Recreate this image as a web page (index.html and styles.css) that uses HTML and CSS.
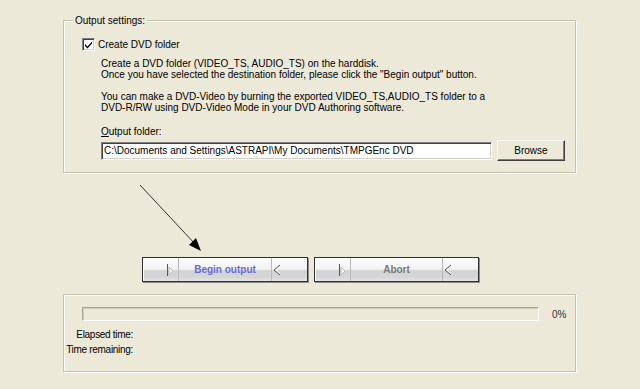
FILE: index.html
```html
<!DOCTYPE html>
<html lang="en">
<head>
  <meta charset="UTF-8">
  <title>DVD Output</title>
  <link rel="stylesheet" href="styles.css">
</head>
<body>
  <div class="window">
    <div class="group settings">
      <span class="group-title">Output settings:</span>

      <label class="check">
        <span class="box">
          <svg width="9" height="9" viewBox="0 0 9 9"><path d="M1 4 L3.5 6.5 L8 1.5 L8 3.5 L3.5 8.5 L1 6 Z" fill="#000"/></svg>
        </span>
        Create DVD folder
      </label>

      <p class="info">Create a DVD folder (VIDEO_TS, AUDIO_TS) on the harddisk.<br>Once you have selected the destination folder, please click the "Begin output" button.</p>
      <p class="info second">You can make a DVD-Video by burning the exported VIDEO_TS,AUDIO_TS folder to a<br>DVD-R/RW using DVD-Video Mode in your DVD Authoring software.</p>

      <div class="field-label"><u>O</u>utput folder:</div>
      <div class="folder-row">
        <input class="folder-input" type="text" value="C:\Documents and Settings\ASTRAPI\My Documents\TMPGEnc DVD">
        <button class="browse">Browse</button>
      </div>
    </div>

    <div class="arrow-area">
      <svg width="513" height="84" viewBox="0 0 513 84">
        <line x1="77" y1="12" x2="133" y2="72" stroke="#333" stroke-width="1"/>
        <polygon points="138,78 126,72 133,65" fill="#000"/>
      </svg>
    </div>

    <div class="actions">
      <button class="action begin">
        <span class="seg seg-side">
          <svg class="glyph-l" width="8" height="12" viewBox="0 0 8 12"><line x1="0.5" y1="0" x2="0.5" y2="12" stroke="#555"/><polygon points="2,3 6,7 2,11" fill="#f2f2f2" stroke="#bbb"/></svg>
        </span>
        <span class="seg seg-label">Begin output</span>
        <span class="seg seg-side right">
          <svg class="glyph-r" width="8" height="12" viewBox="0 0 8 12"><polygon points="7,1 1,6 7,11 7,9 4,6 7,3" fill="#f2f2f2"/><polyline points="7,1 1,6 7,11" fill="none" stroke="#555"/></svg>
        </span>
      </button>
      <button class="action abort">
        <span class="seg seg-side">
          <svg class="glyph-l" width="8" height="12" viewBox="0 0 8 12"><line x1="0.5" y1="0" x2="0.5" y2="12" stroke="#555"/><polygon points="2,3 6,7 2,11" fill="#f2f2f2" stroke="#bbb"/></svg>
        </span>
        <span class="seg seg-label">Abort</span>
        <span class="seg seg-side right">
          <svg class="glyph-r" width="8" height="12" viewBox="0 0 8 12"><polygon points="7,1 1,6 7,11 7,9 4,6 7,3" fill="#f2f2f2"/><polyline points="7,1 1,6 7,11" fill="none" stroke="#555"/></svg>
        </span>
      </button>
    </div>

    <div class="group status">
      <div class="progress-row">
        <div class="progress-bar"></div>
        <span class="percent">0%</span>
      </div>
      <div class="times">
        <span class="time-label">Elapsed time:</span>
        <span class="time-value"></span>
        <span class="time-label">Time remaining:</span>
        <span class="time-value"></span>
      </div>
    </div>
  </div>
</body>
</html>
```

FILE: styles.css
```css
body {
  margin: 0;
  background-color: #ece9d8;
  font-family: "Liberation Sans", Arial, sans-serif;
  font-size: 10px;
  color: #000;
}

.window {
  width: 640px;
  height: 389px;
  padding-left: 63px;
  box-sizing: border-box;
  overflow: hidden;
}

.group {
  position: relative;
  width: 513px;
  box-sizing: border-box;
  border: 1px solid #c5c2b2;
  box-shadow: inset 1px 1px 0 #fff, 1px 1px 0 #fff;
}

.group-title {
  position: absolute;
  top: -7px;
  left: 9px;
  padding: 0 2px;
  line-height: 13px;
  background-color: #ece9d8;
}

.settings {
  margin-top: 20px;
  height: 153px;
  padding: 17px 0 0 18px;
}

.check {
  display: flex;
  align-items: center;
  gap: 3px;
  height: 13px;
}

.check .box {
  width: 13px;
  height: 13px;
  box-sizing: border-box;
  border: 1px solid #808080;
  border-right-color: #fff;
  border-bottom-color: #fff;
  box-shadow: inset 1px 1px 0 #404040, inset -1px -1px 0 #d4d0c8;
  background: #fff;
  display: flex;
  align-items: center;
  justify-content: center;
}

.info {
  margin: 7px 0 0 19px;
  line-height: 11px;
}

.info.second {
  margin-top: 11px;
}

.field-label {
  margin: 13px 0 0 19px;
  line-height: 11px;
}

.folder-row {
  display: flex;
  align-items: center;
  margin: 3px 0 0 19px;
  height: 21px;
}

.folder-input {
  width: 391px;
  height: 18px;
  box-sizing: border-box;
  margin: 0;
  padding: 0 2px;
  border: 1px solid #808080;
  border-right-color: #fff;
  border-bottom-color: #fff;
  box-shadow: inset 1px 1px 0 #404040, inset -1px -1px 0 #d4d0c8;
  font-family: "Liberation Sans", Arial, sans-serif;
  font-size: 10px;
  color: #000;
  background: #fff;
  outline: none;
}

.browse {
  margin-left: 5px;
  width: 68px;
  height: 21px;
  padding: 0;
  border: 1px solid #fff;
  border-right-color: #404040;
  border-bottom-color: #404040;
  box-shadow: inset -1px -1px 0 #808080;
  background: #ece9d8;
  font-family: "Liberation Sans", Arial, sans-serif;
  font-size: 10px;
  color: #000;
}

.arrow-area {
  height: 84px;
}

.arrow-area svg {
  display: block;
}

.actions {
  display: flex;
  gap: 6px;
  margin-left: 79px;
}

.action {
  display: flex;
  height: 25px;
  padding: 0;
  box-sizing: border-box;
  border: 1px solid #303030;
  box-shadow: 1px 1px 0 #8c8c8c, inset 1px 1px 0 #fff;
  background: linear-gradient(to bottom, #fbfbfb 0%, #f3f3f3 48%, #d2d2d2 56%, #d6d6d6 85%, #e6e6e6 100%);
  font-family: "Liberation Sans", Arial, sans-serif;
}

.action.begin {
  width: 166px;
}

.action.abort {
  width: 165px;
}

.seg {
  display: flex;
  align-items: center;
  height: 100%;
}

.seg-side {
  width: 36px;
  justify-content: flex-end;
  padding-right: 3px;
  box-sizing: border-box;
  border-right: 1px solid #b8b8b8;
}

.seg-side.right {
  border-right: none;
  border-left: 1px solid #b8b8b8;
  justify-content: flex-start;
  padding: 0 0 0 1px;
}

.seg-label {
  flex: 1;
  justify-content: center;
  font-weight: bold;
  font-size: 10px;
}

.begin .seg-label {
  color: #6a6ad6;
}

.abort .seg-label {
  color: #7a7a7a;
}

.status {
  margin-top: 12px;
  height: 78px;
  padding: 12px 0 0 18px;
}

.progress-row {
  display: flex;
  align-items: center;
}

.progress-bar {
  width: 457px;
  height: 14px;
  box-sizing: border-box;
  border: 1px solid #a8a596;
  border-right-color: #fff;
  border-bottom-color: #fff;
  box-shadow: inset 1px 1px 0 #d0cdbd;
}

.percent {
  margin-left: 13px;
  color: #333;
}

.times {
  display: grid;
  grid-template-columns: 68px 1fr;
  margin: 6px 0 0 -17px;
  line-height: 15px;
}

.time-label {
  text-align: right;
  white-space: nowrap;
  letter-spacing: -0.3px;
}
```
